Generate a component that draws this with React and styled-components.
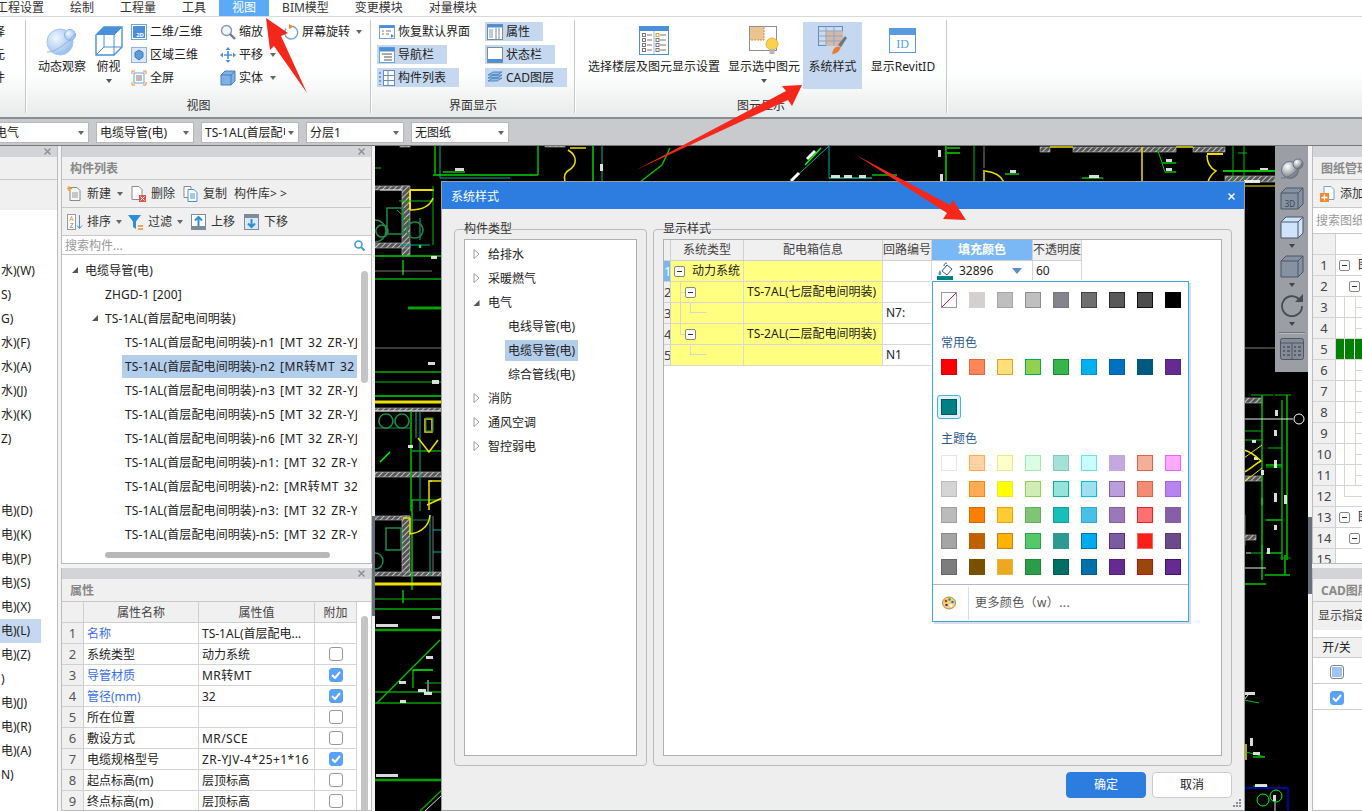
import React from "react";
import styled, { createGlobalStyle } from "styled-components";

const Global = createGlobalStyle`
  html, body { margin: 0; padding: 0; overflow: hidden; background: #f4f4f4; }
  body { font: 12px/16px "Noto Sans", "Noto Sans CJK SC", sans-serif; color: #222; }
  * { box-sizing: border-box; }
`;

const Page = styled.div`
  position: relative;
  width: 1362px;
  height: 811px;
  overflow: hidden;
  display: flex;
  flex-direction: column;
`;

/* ---------- tabs ---------- */
const TabBar = styled.div`
  display: flex;
  height: 17px;
  margin-left: -17px;
  background: #fff;
  border-bottom: 1px solid #d9d9d9;
`;
const Tab = styled.div`
  height: 16px;
  line-height: 16px;
  padding: 0 13px;
  white-space: nowrap;
  color: ${p => (p.$active ? "#fff" : "#333")};
  background: ${p => (p.$active ? "#5aaaf7" : "transparent")};
`;

/* ---------- ribbon ---------- */
const Ribbon = styled.div`
  display: flex;
  height: 102px;
  background: linear-gradient(#fff 0%, #fff 55%, #e8ebeb 100%);
  border-bottom: 2px solid #8b8e91;
`;
const RibbonGroup = styled.div`
  flex: none;
  width: ${p => p.$w}px;
  display: flex;
  flex-direction: column;
  position: relative;
  &::after {
    content: "";
    position: absolute;
    right: 0;
    top: 3px;
    bottom: 4px;
    border-right: 1px solid #c5c8c8;
    box-shadow: 1px 0 0 #fff;
  }
`;
const GroupBody = styled.div`
  height: 79px;
  padding: 5px 0 0 ${p => p.$pad || 0}px;
  display: flex;
`;
const GroupLabel = styled.div`
  height: 20px;
  line-height: 20px;
  text-align: center;
  color: #333;
`;
const ClipCol = styled.div`
  display: flex;
  flex-direction: column;
  gap: 7px;
  margin-left: -7px;
  padding-top: 2px;
`;
const BigBtn = styled.div`
  flex: none;
  width: ${p => p.$w}px;
  height: 67px;
  margin-left: ${p => p.$m || 0}px;
  display: flex;
  flex-direction: column;
  align-items: center;
  white-space: nowrap;
  background: ${p => (p.$active ? "#c5d8f0" : "transparent")};
  color: #222;
`;
const BigIcon = styled.div`
  height: 37px;
  display: flex;
  align-items: center;
  justify-content: center;
`;
const BigCaret = styled.span`
  margin-top: 4px;
  border: 3px solid transparent;
  border-top: 4px solid #555;
  border-bottom: 0;
`;
const SmallCol = styled.div`
  flex: none;
  width: ${p => p.$w}px;
  display: flex;
  flex-direction: column;
  gap: 4px;
`;
const SmallBtn = styled.div`
  width: fit-content;
  height: 19px;
  display: flex;
  align-items: center;
  gap: 3px;
  white-space: nowrap;
  padding: 0 ${p => (p.$active ? 13 : 0)}px 0 2px;
  background: ${p => (p.$active ? "#c5d8f0" : "transparent")};
`;
const Caret = styled.span`
  flex: none;
  margin-left: ${p => p.$m || 0}px;
  margin-right: ${p => p.$r || 0}px;
  border: ${p => p.$s || 3}px solid transparent;
  border-top: ${p => (p.$s || 3) + 1}px solid ${p => p.$c || "#666"};
  border-bottom: 0;
`;

/* ---------- combo row ---------- */
const ComboRow = styled.div`
  height: 26px;
  display: flex;
  gap: 7px;
  padding-top: 3px;
  margin-left: -9px;
  background: #c8cacd;
`;
const Combo = styled.div`
  width: 98px;
  height: 21px;
  padding: 0 13px 0 3px;
  position: relative;
  line-height: 20px;
  background: #fff;
  border: 1px solid #b7b7b7;
  &::after {
    content: "";
    position: absolute;
    right: 4px;
    top: 8px;
    border: 3px solid transparent;
    border-top: 4px solid #666;
    border-bottom: 0;
  }
`;
const ComboText = styled.div`
  white-space: nowrap;
  overflow: hidden;
`;

/* ---------- workspace ---------- */
const Workspace = styled.div`
  flex: 1;
  min-height: 0;
  display: flex;
  border-top: 1px solid #777;
`;
const ClipPanel = styled.div`
  flex: none;
  width: 58px;
  margin-right: 3px;
  display: flex;
  flex-direction: column;
  background: #fff;
  border-right: 1px solid #bbb;
  overflow: hidden;
`;
const ClipHead = styled.div`
  height: 53px;
  flex: none;
  background: #f0f0f0;
  background-image: linear-gradient(#c8c8c8, #c8c8c8);
  background-size: 100% 1px;
  background-position: 0 22px;
  background-repeat: no-repeat;
`;
const ClipList = styled.div`
  padding-top: 49px;
`;
const ClipRow = styled.div`
  height: 24px;
  line-height: 24px;
  white-space: nowrap;
  margin-right: 16px;
  padding-left: 1px;
  background: ${p => (p.$selected ? "#c5d8f0" : "transparent")};
`;
const Column = styled.div`
  flex: none;
  width: 311px;
  display: flex;
  flex-direction: column;
  gap: 4px;
`;
const Splitter = styled.div`
  flex: none;
  width: ${p => p.$w}px;
  position: relative;
  &::after {
    content: "";
    position: absolute;
    right: 0;
    top: ${p => p.$top}px;
    height: ${p => p.$h}px;
    width: ${p => p.$w}px;
    background: #67707a;
  }
`;
const Panel = styled.div`
  flex: ${p => (p.$h ? "none" : 1)};
  height: ${p => (p.$h ? `${p.$h}px` : "auto")};
  min-height: 0;
  display: flex;
  flex-direction: column;
  position: relative;
  background: #fff;
  border: 1px solid #bcbcbc;
  border-top: 0;
  border-right-width: ${p => (p.$open ? 0 : 1)}px;
  overflow: hidden;
`;
const Strip = styled.div`
  flex: none;
  height: 11px;
  padding-right: 6px;
  background: #d2d4d8;
  display: flex;
  align-items: center;
  justify-content: flex-end;
`;
const PanelTitle = styled.div`
  flex: none;
  height: 23px;
  line-height: 24px;
  padding-left: 8px;
  background: #f0f0f0;
  color: #888;
  font-weight: 700;
  border-bottom: 1px solid #c8c8c8;
  white-space: nowrap;
`;
const ToolRow = styled.div`
  flex: none;
  height: 28px;
  display: flex;
  align-items: center;
  padding: 1px 0 0 ${p => p.$pad ?? 5}px;
  background: #f0f0f0;
  border-bottom: 1px solid #c8c8c8;
  color: #333;
  white-space: nowrap;
`;
const ToolBtn = styled.div`
  display: flex;
  align-items: center;
  gap: 4px;
  margin-right: ${p => p.$gap || 0}px;
`;
const SearchRow = styled.div`
  flex: none;
  height: ${p => p.$h || 19}px;
  display: flex;
  align-items: center;
  justify-content: space-between;
  padding: 1px 6px 0 3px;
  color: #999;
  background: #fff;
  border-bottom: 1px solid #c8c8c8;
  white-space: nowrap;
`;
const TreeList = styled.div`
  flex: 1;
  padding: 3px 14px 0 0;
  overflow: hidden;
`;
const TreeRow = styled.div`
  height: 24px;
  display: flex;
  align-items: center;
  padding-left: ${p => p.$indent}px;
  white-space: nowrap;
  overflow: hidden;
`;
const TreeArrow = styled.span`
  flex: none;
  width: 6px;
  height: 6px;
  margin-right: 7px;
  background: #555;
  clip-path: polygon(100% 0, 100% 100%, 0 100%);
`;
const TreeLabel = styled.span`
  flex: ${p => (p.$leaf ? 1 : "none")};
  height: 23px;
  line-height: 23px;
  padding: 0 ${p => (p.$leaf ? 3 : 0)}px;
  overflow: hidden;
  letter-spacing: 0.1px;
  background: ${p => (p.$selected ? "#b3cdec" : "transparent")};
`;
const LeafInfo = styled.span`
  letter-spacing: 0.55px;
  word-spacing: 1px;
`;
const VThumb = styled.div`
  position: absolute;
  right: 3px;
  top: ${p => p.$top}px;
  height: ${p => p.$h}px;
  width: 7px;
  border-radius: 4px;
  background: #c4c4c4;
`;
const HThumb = styled.div`
  position: absolute;
  left: 43px;
  bottom: 5px;
  width: 225px;
  height: 6px;
  border-radius: 3px;
  background: #b8b8b8;
`;

/* ---------- properties ---------- */
const PropGrid = styled.div`
  display: grid;
  grid-template-columns: 22px 115px 116px 42px;
  grid-auto-rows: 21px;
  width: 295px;
`;
const PropHead = styled.div`
  background: #f0f0f0;
  border-right: 1px solid #cfcfcf;
  border-bottom: 1px solid #cfcfcf;
  text-align: center;
  line-height: 21px;
  color: #444;
`;
const PropNum = styled(PropHead)`
  font-size: 13px;
  color: #555;
`;
const PropCell = styled.div`
  padding-left: 3px;
  line-height: 21px;
  white-space: nowrap;
  overflow: hidden;
  letter-spacing: ${p => (p.$wide ? "0.4px" : "0")};
  border-right: 1px solid #d4d4d4;
  border-bottom: 1px solid #d4d4d4;
  color: ${p => (p.$blue ? "#3a6ee8" : "#222")};
`;
const CheckCell = styled.div`
  display: flex;
  align-items: center;
  justify-content: center;
  border-right: 1px solid #d4d4d4;
  border-bottom: 1px solid #d4d4d4;
`;
const CheckBox = styled.span`
  width: 14px;
  height: 14px;
  border-radius: 3px;
  display: flex;
  align-items: center;
  justify-content: center;
  border: 1px solid ${p => (p.$on ? "#5aa2f8" : p.$half ? "#888" : "#999")};
  background: ${p => (p.$on ? "#5aa2f8" : p.$half ? "#9cc4f8" : "#fff")};
  box-shadow: ${p => (p.$half ? "inset 0 0 0 1px #fff" : "none")};
`;

/* ---------- canvas ---------- */
const Canvas = styled.div`
  flex: none;
  width: 933px;
  position: relative;
  background: #000;
  overflow: hidden;
`;
const Drawing = styled.svg`
  display: block;
`;
const ViewBar = styled.div`
  position: absolute;
  right: 0;
  top: 0;
  width: 33px;
  height: 226px;
  padding-top: 12px;
  display: flex;
  flex-direction: column;
  align-items: center;
  background: #9b9ea5;
`;
const ViewGap = styled.div`
  flex: none;
  height: ${p => p.$h}px;
`;
const ViewSep = styled.div`
  width: 26px;
  margin: 6px 0 5px;
  border-top: 1px solid #6f7278;
  box-shadow: 0 1px 0 #b5b8be;
`;
const ViewCaret = styled.span`
  margin: ${p => p.$t}px 0 ${p => p.$b}px;
  border: 3px solid transparent;
  border-top: 4px solid #444;
  border-bottom: 0;
`;

/* ---------- dialog ---------- */
const Dialog = styled.div`
  position: absolute;
  left: 442px;
  top: 182px;
  width: 802px;
  height: 628px;
  display: flex;
  flex-direction: column;
  background: #eee;
  box-shadow: 0 0 0 1px #9aa0a8;
`;
const DialogTitle = styled.div`
  flex: none;
  height: 27px;
  display: flex;
  align-items: center;
  justify-content: space-between;
  padding: 2px 9px 0;
  background: #2d7de1;
  color: #fff;
`;
const DialogBody = styled.div`
  flex: none;
  height: 557px;
  padding: 20px 12px 0;
  display: flex;
  gap: 6px;
`;
const GroupBox = styled.div`
  position: relative;
  width: ${p => p.$w}px;
  height: 537px;
  padding: 9px;
  border: 1px solid #bbb;
  border-radius: 4px;
`;
const Legend = styled.span`
  position: absolute;
  left: 9px;
  top: -9px;
  color: #333;
`;
const WhiteBox = styled.div`
  height: 100%;
  background: #fff;
  border: 1px solid #b0b0b0;
  overflow: hidden;
`;
const TypeRow = styled.div`
  height: 24px;
  display: flex;
  align-items: center;
  padding-left: ${p => p.$indent}px;
  color: #222;
`;
const TypeArrow = styled.span`
  flex: none;
  width: 12px;
  display: flex;
`;
const TypeLabel = styled.span`
  padding: 0 3px;
  height: 21px;
  line-height: 21px;
  background: ${p => (p.$selected ? "#b3cdec" : "transparent")};
`;
const TypeList = styled.div`
  padding-top: 2px;
`;
const StyleGrid = styled.div`
  display: grid;
  grid-template-columns: 7px 73px 139px 49px 101px 49px;
  grid-auto-rows: 21px;
  width: 418px;
`;
const GridHead = styled.div`
  text-align: center;
  line-height: 20px;
  white-space: nowrap;
  overflow: hidden;
  background: ${p => (p.$active ? "#7ab8f5" : "#f0f0f0")};
  color: ${p => (p.$active ? "#fff" : "#444")};
  font-weight: ${p => (p.$active ? 700 : 400)};
  border-right: 1px solid #d0d0d0;
  border-bottom: 1px solid #d0d0d0;
`;
const GridNum = styled.div`
  font-size: 13px;
  line-height: 20px;
  overflow: hidden;
  background: ${p => (p.$active ? "#7ab8f5" : "#f0f0f0")};
  color: ${p => (p.$active ? "#fff" : "#444")};
  border-right: 1px solid #d0d0d0;
  border-bottom: 1px solid #d0d0d0;
`;
const GridCell = styled.div`
  position: relative;
  padding-left: ${p => p.$pad ?? 3}px;
  display: flex;
  align-items: center;
  gap: ${p => p.$gap || 0}px;
  white-space: nowrap;
  overflow: hidden;
  background: ${p => (p.$yellow ? "#ffff80" : "#fff")};
  border-right: 1px solid #d8d8d8;
  border-bottom: 1px solid #d8d8d8;
`;
const MinusBox = styled.span`
  flex: none;
  width: 11px;
  height: 11px;
  position: relative;
  border: 1px solid #888;
  border-radius: 2px;
  background: #fff;
  margin-left: ${p => p.$m || 0}px;
  &::after {
    content: "";
    position: absolute;
    left: 2px;
    right: 2px;
    top: 4px;
    border-top: 1px solid #333;
  }
`;
const Twig = styled.span`
  position: absolute;
  left: ${p => p.$x}px;
  top: ${p => p.$y}px;
  width: ${p => p.$w || 0}px;
  height: ${p => p.$h || 0}px;
  border-left: ${p => (p.$h ? "1px solid #d8d8c8" : 0)};
  border-top: ${p => (p.$w ? "1px solid #d8d8c8" : 0)};
`;
const Footer = styled.div`
  flex: 1;
  display: flex;
  justify-content: flex-end;
  gap: 6px;
  padding: 6px 12px 0 0;
`;
const Button = styled.div`
  width: 80px;
  height: 26px;
  line-height: 24px;
  text-align: center;
  border-radius: 4px;
  background: ${p => (p.$primary ? "#2d7de1" : "#fff")};
  border: 1px solid ${p => (p.$primary ? "#2d7de1" : "#ccc")};
  color: ${p => (p.$primary ? "#fff" : "#222")};
`;
const Grip = styled.svg`
  position: absolute;
  right: 3px;
  bottom: 3px;
`;

/* ---------- colour menu ---------- */
const ColorMenu = styled.div`
  position: absolute;
  left: 490px;
  top: 99px;
  width: 257px;
  height: 341px;
  background: #fff;
  border: 1px solid #3fa9d5;
  box-shadow: 2px 2px 0 #d5deea, -1px -1px 0 #fff;
  padding: 10px 0 0 8px;
  display: flex;
  flex-direction: column;
`;
const SwatchGrid = styled.div`
  display: grid;
  grid-template-columns: repeat(9, 16px);
  column-gap: 12px;
  row-gap: 10px;
  margin-top: ${p => p.$t || 0}px;
`;
const Swatch = styled.span`
  width: 16px;
  height: 16px;
  display: block;
  background: ${p => p.$bg};
  border: 1px solid ${p => p.$line};
`;
const MenuLabel = styled.div`
  height: 16px;
  margin-top: ${p => p.$t}px;
  color: #2f5a8f;
`;
const Picked = styled.div`
  width: 24px;
  height: 24px;
  margin: 20px 0 0 -4px;
  padding: 3px;
  background: #dff1fa;
  border: 1px solid #4cb0de;
  border-radius: 3px;
`;
const MenuFooter = styled.div`
  height: 37px;
  margin: 9px 0 0 -8px;
  display: flex;
  align-items: center;
  border-top: 1px solid #b0bccb;
  color: #555;
  letter-spacing: 0.4px;
`;
const PaletteCell = styled.div`
  width: 36px;
  height: 33px;
  padding-left: 9px;
  margin-right: 6px;
  display: flex;
  align-items: center;
  border-right: 1px solid #d5dde6;
`;

/* ---------- right panel ---------- */
const RightPanel = styled.div`
  flex: 1;
  min-width: 0;
  display: flex;
  flex-direction: column;
  gap: 4px;
`;
const RightRow = styled.div`
  flex: none;
  display: flex;
  height: 21px;
  border-bottom: 1px solid #d4d4d4;
`;
const RightNum = styled.div`
  flex: none;
  width: 23px;
  text-align: center;
  line-height: 20px;
  background: #f0f0f0;
  border-right: 1px solid #cfcfcf;
  font-size: 13px;
  color: #444;
`;
const RightCell = styled.div`
  flex: 1;
  position: relative;
  display: flex;
  align-items: center;
  gap: 8px;
  white-space: nowrap;
  overflow: hidden;
`;
const GreenBits = styled.div`
  display: flex;
  gap: 1px;
  height: 100%;
`;
const GreenBit = styled.span`
  flex: none;
  height: 100%;
  width: ${p => p.$w}px;
  background: #008000;
`;
const CadNote = styled.div`
  flex: none;
  height: 28px;
  line-height: 28px;
  padding-left: 5px;
  background: #f0f0f0;
  white-space: nowrap;
  color: #444;
`;
const CadHead = styled.div`
  flex: none;
  height: 21px;
  margin-top: 7px;
  text-align: center;
  line-height: 20px;
  padding-right: 2px;
  background: #f0f0f0;
  border-top: 1px solid #ccc;
  border-bottom: 1px solid #ccc;
`;
const CadRow = styled.div`
  flex: none;
  height: 26px;
  display: flex;
  align-items: center;
  justify-content: center;
  padding: 2px 2px 0 0;
  border-bottom: 1px solid #ccc;
`;
const Overlay = styled.svg`
  position: absolute;
  left: 0;
  top: 0;
  pointer-events: none;
`;

/* ---------- icons ---------- */
const Sv = ({ w = 16, h = 16, children }) => (
  <svg width={w} height={h} viewBox={`0 0 ${w} ${h}`} style={{ display: "block", flex: "none" }}>{children}</svg>
);
const Close = ({ c = "#8a8d92" }) => (
  <Sv w={7} h={7}><path d="M.5.5l6 6M6.5.5l-6 6" stroke={c} strokeWidth="1.4" /></Sv>
);
const Check = () => (
  <Sv w={10} h={8}><path d="M1 4l3 3 5-6" stroke="#fff" strokeWidth="2" fill="none" /></Sv>
);
const OrbitIcon = () => (
  <Sv w={32} h={32}>
    <defs>
      <radialGradient id="orb" cx="35%" cy="35%" r="75%"><stop offset="0" stopColor="#f0f7fe" /><stop offset="1" stopColor="#8fb9ec" /></radialGradient>
    </defs>
    <circle cx="14" cy="17" r="13" fill="url(#orb)" stroke="#a7c6ea" />
    <circle cx="24" cy="10" r="5.5" fill="url(#orb)" stroke="#8fb4e2" />
    <path d="M1 27C7 28 20 20 29 9" stroke="#8fb4e2" fill="none" />
  </Sv>
);
const TopCube = () => (
  <Sv w={28} h={30}>
    <path d="M1 9L9 1H27V21L19 29H1Z" fill="#fff" stroke="#4a90d9" strokeWidth="1.4" />
    <path d="M1 9L9 1H27L19 9Z" fill="#4a90d9" />
    <path d="M19 9V29M19 9L27 1M9 1V21H27M9 21L1 29" stroke="#4a90d9" fill="none" />
  </Sv>
);
const Icon2D = () => (
  <Sv>
    <rect x=".5" y=".5" width="15" height="15" fill="#fff" stroke="#6da3df" />
    <rect x="2" y="2" width="12" height="12" fill="#4a90d9" />
    <text x="13" y="13" fontSize="6" textAnchor="end" fill="#fff" fontWeight="700">2D</text>
  </Sv>
);
const IconZone = () => (
  <Sv>
    <rect x=".5" y=".5" width="15" height="15" fill="#dbe8f8" stroke="#8fb4e2" />
    <path d="M8 3l4 2.5V10l-4 3-4-3V5.5z" fill="#5c9bdc" stroke="#3f78b5" />
  </Sv>
);
const IconFull = () => (
  <Sv>
    <path d="M1 4V1H4M12 1H15V4M15 12V15H12M4 15H1V12" stroke="#f08a2c" fill="none" />
    <rect x="3" y="3" width="10" height="10" fill="#fff" stroke="#6da3df" />
    <path d="M5 6h6M5 8h6M5 10h6" stroke="#777" />
  </Sv>
);
const IconZoom = () => (
  <Sv>
    <circle cx="6.5" cy="6.5" r="5" fill="#eef5fd" stroke="#8d99a8" strokeWidth="1.4" />
    <path d="M10 10l5 5" stroke="#6b7c90" strokeWidth="2.4" />
  </Sv>
);
const IconPan = () => (
  <Sv>
    <path d="M8 0l2.5 3h-5zM8 16l-2.5-3h5zM0 8l3-2.5v5zM16 8l-3 2.5v-5z" fill="#4a90d9" />
    <path d="M8 4v8M4 8h8" stroke="#4a90d9" strokeWidth="1.6" />
  </Sv>
);
const IconSolid = () => (
  <Sv>
    <path d="M1 5L5 1H15V11L11 15H1Z" fill="#7fb0e6" stroke="#4a7fb8" />
    <path d="M1 5H11V15M11 5L15 1" stroke="#4a7fb8" fill="none" />
  </Sv>
);
const IconRotate = ({ c = "#6da3df" }) => (
  <Sv>
    <path d="M9.5 2.2A6.5 6.5 0 1 1 3 4.5" stroke={c} strokeWidth="1.4" fill="none" />
    <path d="M6 0l5 2.5L6 5z" fill="#f08a2c" />
  </Sv>
);
const IconRestore = () => (
  <Sv>
    <rect x=".5" y="1.5" width="15" height="13" fill="#fff" stroke="#6da3df" />
    <rect x=".5" y="1.5" width="15" height="2.5" fill="#4a90d9" />
    <path d="M3 7h2M3 10h2M7 7h5M7 10h3" stroke="#777" />
    <path d="M12 10l3 2-3 2z" fill="#4a90d9" />
  </Sv>
);
const IconNav = () => (
  <Sv>
    <rect x=".5" y=".5" width="15" height="15" fill="#fff" stroke="#6da3df" />
    <rect x=".5" y=".5" width="15" height="4" fill="#4a90d9" />
    <path d="M3 7h10M5 10h8M5 13h8" stroke="#555" />
  </Sv>
);
const IconList = () => (
  <Sv>
    <path d="M1 2v2M1 6v2M1 10v2M1 14v1" stroke="#4a90d9" strokeWidth="1.5" />
    <rect x="4.5" y=".5" width="11" height="15" fill="#fff" stroke="#6b8db5" />
    <path d="M4.5 5.5h11M4.5 10.5h11M9 .5v15" stroke="#6b8db5" />
  </Sv>
);
const IconAttr = () => (
  <Sv>
    <rect x=".5" y=".5" width="15" height="15" fill="#fff" stroke="#7d8a99" />
    <rect x=".5" y=".5" width="15" height="3" fill="#4a90d9" />
    <rect x="2" y="5" width="4" height="9" fill="#b5cbe6" />
    <path d="M9 4v11M12 4v11" stroke="#7d8a99" />
  </Sv>
);
const IconStatus = () => (
  <Sv>
    <rect x=".5" y=".5" width="15" height="15" fill="#fff" stroke="#7d8a99" />
    <rect x="1" y="12" width="14" height="3" fill="#4a90d9" />
  </Sv>
);
const IconLayers = () => (
  <Sv>
    <path d="M1 11l5-3h9l-5 3zM1 8l5-3h9l-5 3zM1 5l5-3h9l-5 3z" fill="#8fbde8" stroke="#3f78b5" strokeWidth=".8" />
  </Sv>
);
const IconFloors = () => (
  <Sv w={30} h={29}>
    <rect x=".5" y=".5" width="29" height="28" fill="#fff" stroke="#4a90d9" />
    <rect x="0" y="0" width="30" height="5" fill="#4a90d9" />
    <path d="M15 5v23" stroke="#9cb8d8" />
    {[9, 14, 19, 24].map(y => (
      <g key={y}>
        <rect x="3.5" y={y - 1.5} width="3" height="3" fill="#fff" stroke="#777" />
        <path d={`M8 ${y}h5M21 ${y}h6`} stroke="#777" />
        <rect x="17" y={y - 1.5} width="3" height="3" fill="#fff" stroke={y === 9 ? "#e6a43a" : "#777"} />
      </g>
    ))}
  </Sv>
);
const IconBulb = () => (
  <Sv w={30} h={29}>
    <rect x=".5" y=".5" width="27" height="24" fill="#fff" stroke="#8c9096" />
    <rect x="1" y="1" width="14" height="13" fill="#eac492" />
    <path d="M15 1v13H1" stroke="#e08a2a" strokeDasharray="2 1" fill="none" />
    <circle cx="23" cy="18" r="6" fill="#f8d24e" stroke="#e6b23a" />
    <rect x="20.5" y="23" width="5" height="5" fill="#b5b5b5" />
  </Sv>
);
const IconStyle = () => (
  <Sv w={30} h={29}>
    <rect x=".5" y=".5" width="24" height="19" fill="#cfd9e8" stroke="#5c8dc8" />
    <rect x="8" y="5" width="17" height="15" fill="#d6b8a8" />
    <path d="M.5 5h24M.5 10h24M.5 15h24M8 .5v19M16 .5v19" stroke="#8ba7c8" />
    <path d="M14 28c1-6 4-9 9-7l-2 4c-2 2-4 3-7 3z" fill="#ec7a30" />
    <path d="M20 19L27 10l2 2-6 9z" fill="#6f7680" />
  </Sv>
);
const IconId = () => (
  <Sv w={28} h={25}>
    <rect x=".5" y=".5" width="26" height="24" fill="#fff" stroke="#5a9be0" />
    <rect x="0" y="0" width="27" height="7" fill="#5a9be0" />
    <text x="13.5" y="20" fontSize="12" textAnchor="middle" fill="#5a9be0" fontFamily="Liberation Serif, serif">ID</text>
  </Sv>
);
const IconNew = () => (
  <Sv>
    <path d="M3 1.5h7l3 3v10H3z" fill="#f5f5f5" stroke="#8a8a8a" />
    <path d="M5 7h6M5 9h6M5 11h6" stroke="#999" />
    <path d="M2 0v5M0 2.5h5" stroke="#f0a030" strokeWidth="1.4" />
  </Sv>
);
const IconDelete = () => (
  <Sv>
    <path d="M1 .5h7l3 3v10H1z" fill="#fff" stroke="#8a8a8a" />
    <rect x="8" y="9" width="7" height="7" fill="#e2524a" />
    <path d="M9.5 10.5l4 4M13.5 10.5l-4 4" stroke="#fff" />
  </Sv>
);
const IconCopy = () => (
  <Sv>
    <path d="M1 .5h7v11H1z" fill="#fff" stroke="#8a8a8a" />
    <path d="M5 3.5h6l3 3v9H5z" fill="#fff" stroke="#4a90d9" />
    <path d="M7 8h5M7 10h5M7 12h5" stroke="#4a90d9" />
  </Sv>
);
const IconSort = () => (
  <Sv>
    <rect x=".5" y=".5" width="8" height="15" fill="#fff" stroke="#999" />
    <text x="4.5" y="7" fontSize="6.5" textAnchor="middle" fill="#e08a2a">A</text>
    <text x="4.5" y="14" fontSize="6.5" textAnchor="middle" fill="#777">Z</text>
    <path d="M12.5 1v13M10 11.5l2.500 3 2.500-3" stroke="#4a90d9" fill="none" />
  </Sv>
);
const IconFilter = () => (
  <Sv>
    <path d="M0 1h13L8 7.500V15L5 13V7.500z" fill="#2d8fd8" />
    <path d="M10 12h5M10 15h5" stroke="#f08a2c" strokeWidth="1.3" />
  </Sv>
);
const IconMove = ({ down }) => (
  <Sv>
    <rect x=".5" y=".5" width="14" height="15" fill={down ? "#dbe8f8" : "#fff"} stroke="#7d8a99" />
    <rect x="1" y={down ? 1 : 12} width="13" height="3" fill="#7d8a99" />
    <path d={down ? "M7.500 5v8M4 9.500l3.500 3.500 3.500-3.500" : "M7.500 12V3M4 6.500l3.500-3.500 3.500 3.500"} stroke="#2d8fd8" strokeWidth="2" fill="none" />
  </Sv>
);
const IconSearch = () => (
  <Sv w={11} h={11}>
    <circle cx="4.500" cy="4.500" r="3.500" fill="none" stroke="#3f9ad8" strokeWidth="1.500" />
    <path d="M7 7l3.500 3.500" stroke="#3f9ad8" strokeWidth="2" />
  </Sv>
);
const IconAdd = () => (
  <Sv>
    <path d="M4 .5h7l3 3v10H4z" fill="#fff" stroke="#6da3df" />
    <rect x="0" y="7" width="9" height="9" fill="#f08a2c" />
    <path d="M4.500 8.500v6M1.500 11.500h6" stroke="#fff" strokeWidth="1.400" />
  </Sv>
);
const IconBucket = () => (
  <Sv w={17} h={18}>
    <path d="M5 9l5-6 5 4-5 6z" fill="#fff" stroke="#2f5a8f" />
    <path d="M7 4c0-2 1-3 3-3" stroke="#2f5a8f" fill="none" />
    <path d="M3 8c-2 3-2 5 0 5s1-3 0-5z" fill="#4a90d9" />
    <rect x="0" y="14" width="16" height="4" fill="#008080" />
  </Sv>
);
const IconPalette = () => (
  <Sv w={14} h={14}>
    <ellipse cx="7" cy="7" rx="6.500" ry="6" fill="#f3d47e" stroke="#b08a3c" />
    <circle cx="4" cy="5" r="1.300" fill="#d9322c" />
    <circle cx="7.500" cy="3.500" r="1.300" fill="#2ca04a" />
    <circle cx="10.500" cy="6" r="1.300" fill="#2d6fd8" />
    <circle cx="4.500" cy="9" r="1.300" fill="#652b91" />
    <circle cx="9" cy="9.500" r="1.400" fill="#fff" />
  </Sv>
);
const ArrowRight = () => (
  <Sv w={7} h={10}><path d="M1 .5l5 4.500-5 4.500z" fill="#fff" stroke="#999" /></Sv>
);
const ArrowOpen = () => (
  <Sv w={7} h={10}><path d="M6.500 3v6H.5z" fill="#555" /></Sv>
);
const ViewOrbit = () => (
  <Sv w={24} h={21}>
    <defs>
      <radialGradient id="gorb" cx="35%" cy="30%" r="80%"><stop offset="0" stopColor="#fff" /><stop offset="1" stopColor="#5a6472" /></radialGradient>
    </defs>
    <circle cx="10" cy="12" r="8.500" fill="url(#gorb)" stroke="#6a7280" />
    <circle cx="18" cy="6" r="5" fill="url(#gorb)" stroke="#6a7280" />
    <path d="M1 20C8 21 17 14 23 4" stroke="#6a7280" fill="none" />
  </Sv>
);
const ViewCube = ({ fill, label }) => (
  <Sv w={24} h={23}>
    <path d="M1 6L6 1H23V17L18 22H1Z" fill={fill} stroke="#4d5663" />
    <path d="M1 6H18V22M18 6L23 1" stroke="#4d5663" fill="none" />
    {label && <text x="10" y="20" fontSize="8" fill="#3c4450" textAnchor="middle">{label}</text>}
  </Sv>
);
const ViewRotate = () => (
  <Sv w={24} h={24}>
    <path d="M19 6A10 10 0 1 0 22 13" stroke="#444c58" strokeWidth="1.800" fill="none" />
    <path d="M23 1v8h-8z" fill="#444c58" />
  </Sv>
);
const ViewList = () => (
  <Sv w={24} h={22}>
    <rect x=".5" y=".5" width="23" height="21" rx="2" fill="#858c97" stroke="#4d5663" />
    <path d="M1 5h22M12 5v17" stroke="#4d5663" />
    {[9, 13, 17].map(y => (
      <path key={y} d={`M3 ${y}h2M7 ${y}h3M14 ${y}h2M18 ${y}h3`} stroke="#2c3440" />
    ))}
  </Sv>
);

/* ---------- CAD lines ---------- */
const G = "#00c000";
const B = "#00ff00";
const T = "#00b496";
const Y = "#f0e000";
const W = "#e8e8e8";
const cadLines = [
  [435, 146, 435, 175, G, 1.5], [433, 175, 538, 175, "#00a000", 2], [538, 146, 538, 175, G, 1.5],
  [440, 146, 440, 178, T, 1], [440, 178, 510, 178, T, 1], [443, 172, 465, 172, G, 1.5],
  [375, 168, 381, 168, G, 1], [380, 190, 402, 190, W, 1], [410, 190, 434, 190, Y, 2], [410, 190, 410, 210, Y, 2],
  [399, 201, 433, 201, G, 1], [397, 210, 410, 222, G, 1], [433, 186, 433, 245, G, 1], [375, 256, 442, 256, "#00d000", 1.5],
  [375, 279, 442, 279, B, 1], [403, 260, 403, 275, G, 1.5], [375, 271, 432, 271, W, 0.5], [408, 308, 442, 308, "#00a000", 3],
  [400, 245, 430, 245, T, 1], [420, 218, 420, 240, T, 1], [420, 245, 420, 248, B, 2],
  [375, 348, 442, 348, "#3a3a3a", 2], [375, 372, 442, 372, "#00b000", 1.5], [375, 382, 442, 382, "#00c000", 1],
  [375, 396, 442, 396, "#00a000", 2], [375, 402, 442, 402, Y, 3], [375, 411, 442, 411, W, 1],
  [411, 411, 411, 511, "#00c000", 1.5], [420, 411, 420, 511, T, 1], [416, 411, 416, 438, "#40a080", 1], [375, 428, 411, 428, "#2a8050", 1],
  [411, 451, 442, 451, "#00a000", 1.5], [411, 500, 442, 500, "#00a000", 1.5], [380, 462, 390, 452, B, 1.5],
  [428, 481, 432, 481, "#fff", 1], [429, 481, 429, 510, Y, 1.5], [429, 481, 442, 481, Y, 1.5], [427, 505, 442, 498, Y, 1.5],
  [412, 500, 412, 590, "#00c000", 1.5], [430, 515, 430, 575, T, 1], [411, 520, 430, 520, "#208060", 1],
  [433, 530, 442, 530, T, 1], [433, 552, 442, 552, T, 1], [433, 516, 433, 575, W, 0.5], [375, 584, 442, 584, Y, 3],
  [375, 599, 442, 599, "#00c000", 1], [375, 609, 442, 609, B, 1], [403, 590, 403, 603, G, 1.5], [375, 630, 442, 630, "#00a000", 2.5],
  [377, 703, 440, 640, "#00c000", 1.5], [375, 692, 442, 692, "#00a000", 1.5], [375, 703, 442, 703, "#00a000", 1.5],
  [413, 670, 433, 670, B, 1.5], [413, 670, 413, 688, B, 1], [428, 680, 428, 692, W, 1], [425, 683, 442, 683, G, 1],
  [375, 780, 442, 780, "#00a000", 2.5], [420, 811, 442, 790, "#00a000", 1.5], [425, 811, 442, 795, W, 1],
  [570, 148, 586, 148, Y, 1.5], [593, 146, 593, 182, "#00a000", 2], [602, 146, 602, 182, T, 1],
  [662, 165, 670, 148, G, 1.5], [640, 182, 662, 165, G, 1.5],
  [829, 146, 790, 182, T, 1], [821, 148, 805, 165, B, 1.5], [829, 146, 829, 178, T, 1], [829, 178, 872, 178, T, 1.5],
  [872, 175, 897, 175, G, 1.5], [946, 146, 946, 182, "#00a000", 2], [946, 148, 960, 148, "#00a000", 2], [946, 153, 960, 153, "#00a000", 2],
  [974, 146, 974, 182, G, 1], [984, 146, 984, 168, "#555", 1.5], [984, 170, 984, 182, Y, 1.5], [1005, 174, 1019, 174, G, 1.5],
  [1082, 178, 1103, 178, G, 1.5], [1050, 147, 1073, 147, Y, 1.5], [1176, 147, 1193, 147, Y, 1.5], [1142, 147, 1142, 182, Y, 1.5],
  [1157, 148, 1165, 172, G, 1], [1165, 172, 1176, 172, G, 1.5], [1162, 163, 1176, 163, G, 1.5], [1233, 146, 1233, 182, G, 1],
  [1244, 146, 1244, 245, G, 1], [1207, 154, 1223, 154, Y, 2], [1223, 171, 1275, 171, "#00c000", 2], [1238, 153, 1247, 153, G, 1],
  [1244, 186, 1275, 186, Y, 1], [1244, 348, 1275, 348, "#555", 1.5], [1262, 395, 1262, 560, "#00c000", 1.5], [1287, 395, 1287, 560, "#00c000", 1.5], [1282, 400, 1282, 560, B, 1],
  [1244, 419, 1293, 419, W, 1], [1251, 395, 1273, 395, G, 1], [1275, 395, 1291, 395, G, 1], [1268, 448, 1282, 448, G, 1],
  [1244, 431, 1262, 431, G, 1], [1244, 440, 1262, 440, G, 1], [1266, 465, 1282, 465, G, 1.5], [1266, 467, 1282, 467, G, 1],
  [1244, 458, 1262, 445, Y, 1], [1244, 482, 1262, 468, Y, 1], [1262, 498, 1262, 505, G, 2], [1266, 520, 1282, 520, G, 1.5],
  [1266, 553, 1282, 553, G, 1.5], [1251, 553, 1262, 553, G, 1], [1246, 553, 1251, 553, W, 1], [1262, 545, 1262, 580, "#00c000", 1.5],
  [1244, 568, 1266, 568, W, 1], [1265, 575, 1290, 575, G, 1.5], [1244, 584, 1266, 584, G, 1.5],
  [1285, 555, 1285, 575, G, 1.5], [1280, 558, 1291, 558, "#00a000", 1], [1244, 700, 1259, 703, G, 1], [1244, 700, 1248, 695, W, 1],
  [1246, 744, 1246, 760, Y, 1.5], [1246, 752, 1265, 757, G, 1], [1253, 757, 1265, 757, G, 1.5], [1244, 788, 1288, 788, "#0000d0", 1.5],
  [1288, 788, 1288, 811, "#0000d0", 1.5], [1253, 786, 1268, 786, G, 1], [1275, 801, 1275, 811, W, 1],
];
const cadHatch = [
  [375, 186, 34, 4], [402, 186, 8, 70], [375, 243, 35, 5], [375, 408, 67, 3], [375, 472, 67, 5], [375, 516, 35, 4], [402, 516, 8, 60],
  [375, 572, 67, 4], [1040, 147, 10, 5], [1073, 147, 103, 5], [1193, 147, 32, 5], [1225, 176, 50, 6], [1244, 515, 1, 30],
  [1244, 398, 18, 5], [1244, 476, 18, 5], [1244, 535, 12, 5], [545, 146, 20, 1], [400, 146, 10, 1],
];
const cadMarks = [
  [455, 168, 9, 3], [431, 256, 6, 3], [432, 380, 7, 4], [428, 362, 7, 3], [408, 445, 5, 3], [432, 616, 8, 3], [426, 656, 7, 3],
  [418, 689, 8, 3], [399, 681, 7, 3], [400, 700, 6, 3], [376, 624, 22, 3], [376, 774, 22, 3], [424, 692, 8, 3], [600, 164, 3, 7],
  [831, 175, 9, 3], [844, 175, 8, 3], [859, 175, 7, 3], [938, 150, 3, 7], [940, 174, 3, 8], [1010, 170, 6, 3],
  [1089, 175, 10, 3], [1166, 159, 6, 3], [1166, 168, 6, 3], [1260, 168, 8, 2], [1244, 180, 16, 3],
  [1275, 410, 3, 6], [1261, 470, 3, 5], [1274, 430, 3, 6], [1274, 460, 3, 8], [1274, 493, 3, 9], [1284, 495, 3, 9], [1274, 525, 3, 5],
  [1252, 440, 4, 3], [1254, 457, 4, 3], [1245, 692, 10, 3], [1250, 738, 3, 8], [1253, 752, 7, 3], [1255, 784, 12, 3], [1273, 795, 3, 6], [1267, 548, 3, 6],
];
const cadSlants = [[811, 155], [795, 177]];

const CadDrawing = () => (
  <Drawing width="933" height="665" viewBox="375 146 933 665">
    <defs>
      <pattern id="hatch" width="4" height="4" patternUnits="userSpaceOnUse" patternTransform="rotate(45)">
        <rect width="4" height="4" fill="#555" />
        <path d="M0 0V4" stroke="#ddd" strokeWidth="1.600" />
      </pattern>
    </defs>
    {cadHatch.map(([x, y, w, h], i) => <rect key={i} x={x} y={y} width={w} height={h} fill="url(#hatch)" stroke="#bbb" strokeWidth=".6" />)}
    {cadLines.map(([a, b, c, d, col, sw], i) => <line key={i} x1={a} y1={b} x2={c} y2={d} stroke={col} strokeWidth={sw} />)}
    {cadMarks.map(([x, y, w, h], i) => <rect key={i} x={x} y={y} width={w} height={h} fill="#fff" opacity=".85" />)}
    {cadSlants.map(([x, y], i) => <line key={i} x1={x - 4} y1={y + 4} x2={x + 4} y2={y - 4} stroke="#fff" strokeWidth="3" />)}
    <path d="M410 210C421 210 430 206 433 198" stroke={Y} strokeWidth="1.500" fill="none" />
    <path d="M403 518h7M410 518v16C423 532 429 525 430 515" stroke={Y} strokeWidth="1.500" fill="none" />
    <path d="M568 150C578 156 577 165 569 170C562 174 565 180 565 182" stroke={Y} strokeWidth="1.500" fill="none" />
    <path d="M985 171C995 172 1001 176 1004 182" stroke={Y} strokeWidth="1.500" fill="none" />
    <path d="M1207 155C1207 162 1210 168 1216 171C1212 174 1209 178 1208 182" stroke={Y} strokeWidth="1.500" fill="none" />
    <path d="M386 414a7 7 0 1 1 -.1 0M402 414a7 7 0 1 1 -.1 0" stroke="#1f8a4a" strokeWidth="1.500" fill="none" />
    <path d="M425 419h7v13h-7zM418 438L429 452L438 440" stroke={Y} strokeWidth="1.500" fill="none" />
    <rect x="426" y="418" width="7" height="13" fill="none" stroke="#2a8a5a" />
    <path d="M387 214v-6h16v26h-16zM375 220a10 10 0 0 1 0 22M382 225a6 6 0 1 1 -.1 0M415 222a8 8 0 1 1 -.1 0" stroke="#1f8a4a" strokeWidth="1.500" fill="none" />
    <path d="M386 528h15v22h-15zM375 553a8 8 0 1 1 0 16" stroke="#1f8a4a" strokeWidth="1.500" fill="none" />
    <path d="M1244 450C1252 452 1258 458 1261 461C1256 463 1250 470 1244 472" stroke={Y} strokeWidth="1.500" fill="none" />
    <circle cx="1299" cy="419" r="5" stroke="#fff" fill="none" />
    <circle cx="1263" cy="800" r="6" stroke={B} fill="none" />
    <circle cx="1276" cy="796" r="6" stroke={B} fill="none" />
  </Drawing>
);

/* ---------- data ---------- */
const clipRows = ["水)(W)", "S)", "G)", "水)(F)", "水)(A)", "水)(J)", "水)(K)", "Z)", "", "", "电)(D)", "电)(K)", "电)(P)", "电)(S)", "电)(X)", "电)(L)", "电)(Z)", ")", "电)(J)", "电)(R)", "电)(A)", "N)"];
const treeLeafs = [
  "-n1 [MT 32 ZR-YJ", "-n2 [MR转MT 32", "-n3 [MT 32 ZR-YJ", "-n5 [MT 32 ZR-YJ", "-n6 [MT 32 ZR-YJ",
  "-n1: [MT 32 ZR-Y.", "-n2: [MR转MT 32", "-n3: [MT 32 ZR-Y.", "-n5: [MT 32 ZR-Y.",
];
const props = [
  { name: "名称", value: "TS-1AL(首层配电...", check: null, blue: true },
  { name: "系统类型", value: "动力系统", check: false },
  { name: "导管材质", value: "MR转MT", check: true, blue: true, wide: true },
  { name: "管径(mm)", value: "32", check: true, blue: true },
  { name: "所在位置", value: "", check: false },
  { name: "敷设方式", value: "MR/SCE", check: false, wide: true },
  { name: "电缆规格型号", value: "ZR-YJV-4*25+1*16", check: true, wide: true },
  { name: "起点标高(m)", value: "层顶标高", check: false },
  { name: "终点标高(m)", value: "层顶标高", check: false },
];
const grays = [
  ["#d5d0d0", "#d5d0d0"], ["#bfbfbf", "#a6a6a6"], ["#bfbfbf", "#8c8c8c"], ["#85838d", "#777"], ["#6f6f6f", "#444"], ["#595959", "#2a2a2a"], ["#4d4d4d", "#111"], ["#000", "#000"],
];
const common = [
  ["#ff0000", "#d4001a"], ["#ff8659", "#d96a3a"], ["#ffdf7a", "#e0a020"], ["#92d050", "#00b050"], ["#35b54a", "#1a8a35"],
  ["#00b0f0", "#0090d0"], ["#0070c0", "#0060a8"], ["#005a80", "#005a80"], ["#652b91", "#4b2a80"],
];
const theme = [
  ["#fff", "#e5e5e5"], ["#ffd3a5", "#ffac50"], ["#ffffcc", "#e8e88c"], ["#dbfde6", "#a9e5b0"], ["#a5e0d9", "#7fcdb8"], ["#c7fffe", "#72dbf0"], ["#c6a8e0", "#c6a8e0"], ["#f2b09b", "#e0604c"], ["#ffaaff", "#ee60ff"],
  ["#d5d5d5", "#bbb"], ["#ffab55", "#ff8800"], ["#ffff00", "#e8e830"], ["#d2ecb5", "#92d050"], ["#95e4dc", "#10b0a0"], ["#9fe0f0", "#00bff0"], ["#bb9ddb", "#8560a8"], ["#f38b75", "#e0604c"], ["#b885ef", "#a060f0"],
  ["#bbb", "#a0a0a0"], ["#ff8000", "#d96800"], ["#ffcb33", "#ff9f00"], ["#80c476", "#60b060"], ["#15c0b8", "#10a09a"], ["#48c0e8", "#30a8d8"], ["#9a79b8", "#8560a8"], ["#ff7070", "#f02020"], ["#8560a8", "#8560a8"],
  ["#a5a5a5", "#888"], ["#c06000", "#c06000"], ["#ffb300", "#c08030"], ["#55c96a", "#2ca04a"], ["#2c9a90", "#2c9a90"], ["#00aced", "#0070b0"], ["#7b5c9e", "#5c2c90"], ["#f82018", "#ff6060"], ["#6a4a8a", "#5c3a7a"],
  ["#7d7d7d", "#666"], ["#785000", "#785000"], ["#eba820", "#f0b040"], ["#2c9c4a", "#1a8a35"], ["#006f64", "#005a50"], ["#0070a8", "#005a90"], ["#652b91", "#50207a"], ["#99470a", "#c01010"], ["#652b91", "#40106a"],
];
const Swatches = ({ items, t }) => (
  <SwatchGrid $t={t}>
    {items.map(([bg, line], i) => <Swatch key={i} $bg={bg} $line={line} />)}
  </SwatchGrid>
);

export default function App() {
  return (
    <Page>
      <Global />
      <TabBar>
        <Tab>工程设置</Tab><Tab>绘制</Tab><Tab>工程量</Tab><Tab>工具</Tab>
        <Tab $active>视图</Tab><Tab>BIM模型</Tab><Tab>变更模块</Tab><Tab>对量模块</Tab>
      </TabBar>

      <Ribbon>
        <RibbonGroup $w={26}>
          <GroupBody>
            <ClipCol><span>择</span><span>元</span><span>件</span></ClipCol>
          </GroupBody>
        </RibbonGroup>
        <RibbonGroup $w={345}>
          <GroupBody $pad={10}>
            <BigBtn $w={52}><BigIcon><OrbitIcon /></BigIcon>动态观察</BigBtn>
            <BigBtn $w={41}><BigIcon><TopCube /></BigIcon>俯视<BigCaret /></BigBtn>
            <SmallCol $w={89}>
              <SmallBtn><Icon2D />二维/三维</SmallBtn>
              <SmallBtn><IconZone />区域三维</SmallBtn>
              <SmallBtn><IconFull />全屏</SmallBtn>
            </SmallCol>
            <SmallCol $w={63}>
              <SmallBtn><IconZoom />缩放</SmallBtn>
              <SmallBtn><IconPan />平移<Caret $m={4} /></SmallBtn>
              <SmallBtn><IconSolid />实体<Caret $m={4} /></SmallBtn>
            </SmallCol>
            <SmallCol $w={80}>
              <SmallBtn><IconRotate />屏幕旋转<Caret $m={3} /></SmallBtn>
            </SmallCol>
          </GroupBody>
          <GroupLabel>视图</GroupLabel>
        </RibbonGroup>
        <RibbonGroup $w={204}>
          <GroupBody $pad={6}>
            <SmallCol $w={108}>
              <SmallBtn><IconRestore />恢复默认界面</SmallBtn>
              <SmallBtn $active><IconNav />导航栏</SmallBtn>
              <SmallBtn $active><IconList />构件列表</SmallBtn>
            </SmallCol>
            <SmallCol $w={90}>
              <SmallBtn $active><IconAttr />属性</SmallBtn>
              <SmallBtn $active><IconStatus />状态栏</SmallBtn>
              <SmallBtn $active><IconLayers />CAD图层</SmallBtn>
            </SmallCol>
          </GroupBody>
          <GroupLabel>界面显示</GroupLabel>
        </RibbonGroup>
        <RibbonGroup $w={372}>
          <GroupBody $pad={12}>
            <BigBtn $w={134}><BigIcon><IconFloors /></BigIcon>选择楼层及图元显示设置</BigBtn>
            <BigBtn $w={78} $m={4}><BigIcon><IconBulb /></BigIcon>显示选中图元<BigCaret /></BigBtn>
            <BigBtn $w={59} $active><BigIcon><IconStyle /></BigIcon>系统样式</BigBtn>
            <BigBtn $w={82}><BigIcon><IconId /></BigIcon>显示RevitID</BigBtn>
          </GroupBody>
          <GroupLabel>图元显示</GroupLabel>
        </RibbonGroup>
      </Ribbon>

      <ComboRow>
        <Combo><ComboText>电气</ComboText></Combo>
        <Combo><ComboText>电缆导管(电)</ComboText></Combo>
        <Combo><ComboText>TS-1AL(首层配电</ComboText></Combo>
        <Combo><ComboText>分层1</ComboText></Combo>
        <Combo><ComboText>无图纸</ComboText></Combo>
      </ComboRow>

      <Workspace>
        <ClipPanel>
          <Strip><Close /></Strip>
          <ClipHead />
          <ClipList>
            {clipRows.map((t, i) => <ClipRow key={i} $selected={i === 15}>{t}</ClipRow>)}
          </ClipList>
        </ClipPanel>

        <Column>
          <Panel $h={418}>
            <Strip><Close /></Strip>
            <PanelTitle>构件列表</PanelTitle>
            <ToolRow>
              <ToolBtn><IconNew />新建</ToolBtn>
              <Caret $m={6} $r={8} />
              <ToolBtn $gap={8}><IconDelete />删除</ToolBtn>
              <ToolBtn $gap={7}><IconCopy />复制</ToolBtn>
              <ToolBtn>构件库&gt; &gt;</ToolBtn>
            </ToolRow>
            <ToolRow>
              <ToolBtn $gap={5}><IconSort />排序</ToolBtn>
              <Caret $r={6} />
              <ToolBtn $gap={5}><IconFilter />过滤</ToolBtn>
              <Caret $r={8} />
              <ToolBtn $gap={9}><IconMove />上移</ToolBtn>
              <ToolBtn><IconMove down />下移</ToolBtn>
            </ToolRow>
            <SearchRow>搜索构件...<IconSearch /></SearchRow>
            <TreeList>
              <TreeRow $indent={10}><TreeArrow /><TreeLabel>电缆导管(电)</TreeLabel></TreeRow>
              <TreeRow $indent={43}><TreeLabel>ZHGD-1 [200]</TreeLabel></TreeRow>
              <TreeRow $indent={30}><TreeArrow /><TreeLabel>TS-1AL(首层配电间明装)</TreeLabel></TreeRow>
              {treeLeafs.map((t, i) => (
                <TreeRow key={i} $indent={60}>
                  <TreeLabel $leaf $selected={i === 1}>TS-1AL(首层配电间明装)<LeafInfo>{t}</LeafInfo></TreeLabel>
                </TreeRow>
              ))}
            </TreeList>
            <VThumb $top={125} $h={112} />
            <HThumb />
          </Panel>

          <Panel>
            <Strip><Close /></Strip>
            <PanelTitle>属性</PanelTitle>
            <PropGrid>
              <PropHead /><PropHead>属性名称</PropHead><PropHead>属性值</PropHead><PropHead>附加</PropHead>
              {props.map(({ name, value, check, blue, wide }, i) => (
                <React.Fragment key={i}>
                  <PropNum>{i + 1}</PropNum>
                  <PropCell $blue={blue}>{name}</PropCell>
                  <PropCell $wide={wide}>{value}</PropCell>
                  <CheckCell>
                    {check !== null && <CheckBox $on={check}>{check && <Check />}</CheckBox>}
                  </CheckCell>
                </React.Fragment>
              ))}
            </PropGrid>
            <VThumb $top={48} $h={220} />
          </Panel>
        </Column>

        <Splitter $w={3} $top={370} $h={100} />

        <Canvas>
          <CadDrawing />
          <ViewBar>
            <ViewOrbit />
            <ViewGap $h={8} />
            <ViewCube fill="#8692a4" label="3D" />
            <ViewGap $h={6} />
            <ViewCube fill="#cfe3fb" />
            <ViewCaret $t={5} $b={7} />
            <ViewCube fill="#8692a4" />
            <ViewCaret $t={5} $b={6} />
            <ViewRotate />
            <ViewCaret $t={5} $b={0} />
            <ViewSep />
            <ViewList />
          </ViewBar>
        </Canvas>

        <Splitter $w={4} $top={371} $h={77} />

        <RightPanel>
          <Panel $h={418} $open>
            <Strip />
            <PanelTitle>图纸管理</PanelTitle>
            <ToolRow $pad={7}><ToolBtn><IconAdd />添加</ToolBtn></ToolRow>
            <SearchRow $h={26}>搜索图纸</SearchRow>
            <RightRow><RightNum /><RightCell /></RightRow>
            {Array.from({ length: 15 }, (_, i) => i + 1).map(n => (
              <RightRow key={n}>
                <RightNum>{n}</RightNum>
                <RightCell>
                  {(n === 1 || n === 13) && <><MinusBox $m={3} />图</>}
                  {(n === 2 || n === 14) && <MinusBox $m={13} />}
                  {n === 5 && <GreenBits><GreenBit $w={8} /><GreenBit $w={9} /><GreenBit $w={10} /></GreenBits>}
                  {n > 2 && n < 12 && n !== 5 && <><Twig $x={8} $y={0} $h={21} /><Twig $x={19} $y={0} $h={21} /><Twig $x={19} $y={10} $w={8} /></>}
                  {n === 12 && <><Twig $x={8} $y={0} $h={10} /><Twig $x={8} $y={10} $w={20} /></>}
                </RightCell>
              </RightRow>
            ))}
          </Panel>
          <Panel $open>
            <Strip />
            <PanelTitle>CAD图层</PanelTitle>
            <CadNote>显示指定</CadNote>
            <CadHead>开/关</CadHead>
            <CadRow><CheckBox $half /></CadRow>
            <CadRow><CheckBox $on><Check /></CheckBox></CadRow>
          </Panel>
        </RightPanel>
      </Workspace>

      <Dialog>
        <DialogTitle>系统样式<Close c="#fff" /></DialogTitle>
        <DialogBody>
          <GroupBox $w={193}>
            <Legend>构件类型</Legend>
            <WhiteBox>
              <TypeList>
                <TypeRow $indent={8}><TypeArrow><ArrowRight /></TypeArrow><TypeLabel>给排水</TypeLabel></TypeRow>
                <TypeRow $indent={8}><TypeArrow><ArrowRight /></TypeArrow><TypeLabel>采暖燃气</TypeLabel></TypeRow>
                <TypeRow $indent={8}><TypeArrow><ArrowOpen /></TypeArrow><TypeLabel>电气</TypeLabel></TypeRow>
                <TypeRow $indent={40}><TypeLabel>电线导管(电)</TypeLabel></TypeRow>
                <TypeRow $indent={40}><TypeLabel $selected>电缆导管(电)</TypeLabel></TypeRow>
                <TypeRow $indent={40}><TypeLabel>综合管线(电)</TypeLabel></TypeRow>
                <TypeRow $indent={8}><TypeArrow><ArrowRight /></TypeArrow><TypeLabel>消防</TypeLabel></TypeRow>
                <TypeRow $indent={8}><TypeArrow><ArrowRight /></TypeArrow><TypeLabel>通风空调</TypeLabel></TypeRow>
                <TypeRow $indent={8}><TypeArrow><ArrowRight /></TypeArrow><TypeLabel>智控弱电</TypeLabel></TypeRow>
              </TypeList>
            </WhiteBox>
          </GroupBox>
          <GroupBox $w={579}>
            <Legend>显示样式</Legend>
            <WhiteBox>
              <StyleGrid>
                <GridHead /><GridHead>系统类型</GridHead><GridHead>配电箱信息</GridHead><GridHead>回路编号</GridHead>
                <GridHead $active>填充颜色</GridHead><GridHead>不透明度</GridHead>

                <GridNum $active>1</GridNum>
                <GridCell $yellow $pad={3} $gap={7}><MinusBox />动力系统</GridCell>
                <GridCell $yellow />
                <GridCell />
                <GridCell $pad={5} $gap={5}>
                  <IconBucket />32896
                  <Caret $c="#5a8fc8" $s={5} $m={14} />
                </GridCell>
                <GridCell>60</GridCell>

                <GridNum>2</GridNum>
                <GridCell $yellow $pad={14}><Twig $x={9} $y={0} $h={21} /><Twig $x={9} $y={10} $w={5} /><MinusBox /></GridCell>
                <GridCell $yellow>TS-7AL(七层配电间明装)</GridCell>
                <GridCell /><GridCell /><GridCell />

                <GridNum>3</GridNum>
                <GridCell $yellow><Twig $x={9} $y={0} $h={21} /><Twig $x={19} $y={0} $h={9} /><Twig $x={19} $y={9} $w={17} /></GridCell>
                <GridCell $yellow />
                <GridCell>N7:</GridCell><GridCell /><GridCell />

                <GridNum>4</GridNum>
                <GridCell $yellow $pad={14}><Twig $x={9} $y={0} $h={10} /><Twig $x={9} $y={10} $w={5} /><MinusBox /></GridCell>
                <GridCell $yellow>TS-2AL(二层配电间明装)</GridCell>
                <GridCell /><GridCell /><GridCell />

                <GridNum>5</GridNum>
                <GridCell $yellow><Twig $x={19} $y={0} $h={9} /><Twig $x={19} $y={9} $w={17} /></GridCell>
                <GridCell $yellow />
                <GridCell>N1</GridCell><GridCell /><GridCell />
              </StyleGrid>
            </WhiteBox>
          </GroupBox>
        </DialogBody>
        <Footer>
          <Button $primary>确定</Button>
          <Button>取消</Button>
        </Footer>
        <Grip width="9" height="9">
          {[[7, 1], [4, 4], [7, 4], [1, 7], [4, 7], [7, 7]].map(([x, y]) => <rect key={`${x}${y}`} x={x} y={y} width="2" height="2" fill="#8a8d92" />)}
        </Grip>

        <ColorMenu>
          <SwatchGrid>
            <Sv><rect x=".5" y=".5" width="15" height="15" fill="#fff" stroke="#999" /><path d="M1 15L15 1" stroke="#e01030" /></Sv>
            {grays.map(([bg, line], i) => <Swatch key={i} $bg={bg} $line={line} />)}
          </SwatchGrid>
          <MenuLabel $t={27}>常用色</MenuLabel>
          <Swatches items={common} t={8} />
          <Picked><Swatch $bg="#008080" $line="#005a60" /></Picked>
          <MenuLabel $t={12}>主题色</MenuLabel>
          <Swatches items={theme} t={8} />
          <MenuFooter>
            <PaletteCell><IconPalette /></PaletteCell>
            更多颜色（w）...
          </MenuFooter>
        </ColorMenu>
      </Dialog>

      <Overlay width="1362" height="811" viewBox="0 0 1362 811">
        <polygon points="266,18 288,33 281,36 307,93 274,46 270,50" fill="#f5271b" />
        <polygon points="636,170 786,91 782,86 802,85 792,106 788,100" fill="#f5271b" />
        <polygon points="856,155 950,205 953,200 966,220 943,219 947,213" fill="#f5271b" />
      </Overlay>
    </Page>
  );
}
